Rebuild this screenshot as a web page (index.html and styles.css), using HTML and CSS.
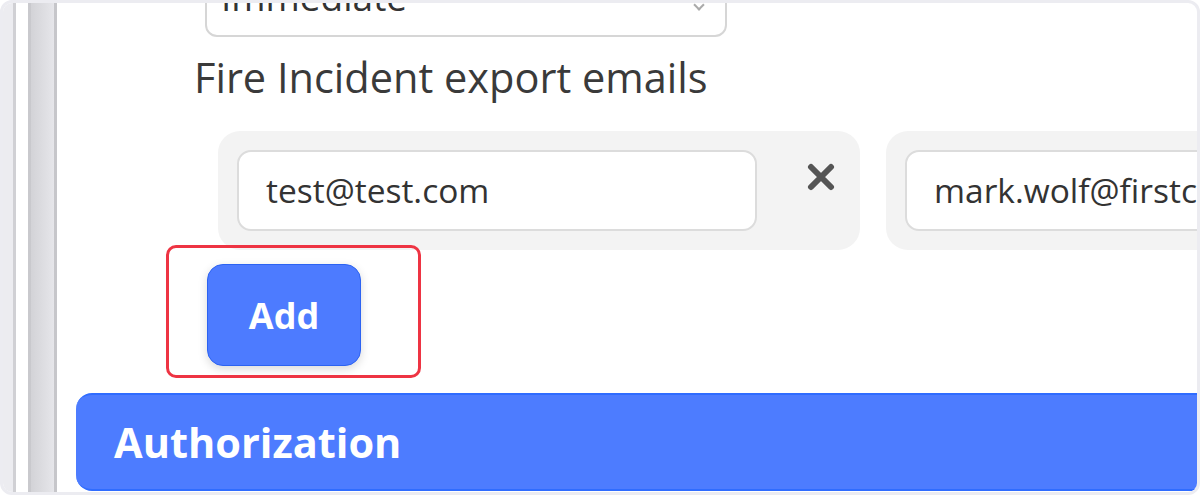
FILE: index.html
```html
<!DOCTYPE html>
<html lang="en">
<head>
  <meta charset="UTF-8" />
  <title>Fire Incident settings</title>
  <link rel="stylesheet" href="styles.css">
</head>
<body>

  <div class="frame">
    <div class="rail">
      <div class="rail-a"></div>
      <div class="rail-gap"></div>
      <div class="rail-b"></div>
    </div>

    <div class="content">
      <div class="field">
        <div class="select">
          <span>Immediate</span>
          <span class="chev"></span>
        </div>

        <div class="field-label">Fire Incident export emails</div>

        <div class="emails">
          <div class="email-item">
            <div class="email-input">test@test.com</div>
            <button class="remove" title="Remove">
              <svg width="28" height="28" viewBox="0 0 28 28">
                <path d="M4 4 L24 24 M24 4 L4 24" stroke="#555" stroke-width="6" stroke-linecap="round" fill="none" />
              </svg>
            </button>
          </div>
          <div class="email-item">
            <div class="email-input wide">mark.wolf@firstcallsolutions.com</div>
          </div>
        </div>

        <div class="add-wrap">
          <button class="add-btn">Add</button>
        </div>
      </div>

      <div class="section-bar">Authorization</div>
    </div>
  </div>

</body>
</html>
```

FILE: styles.css
```css
body {
  margin: 0;
  font-family: "Open Sans", "Noto Sans", sans-serif;
  background: #ffffff;
}
.frame {
  width: 1200px;
  height: 495px;
  box-sizing: border-box;
  border: 3px solid #ececf1;
  border-radius: 12px;
  overflow: hidden;
  display: flex;
  background: #ffffff;
}

/* left rail */
.rail {
  display: flex;
  flex-shrink: 0;
  width: 54px;
}
.rail-a {
  width: 10px;
  background: #ececf0;
  border-right: 3px solid #d0d0d4;
}
.rail-gap {
  width: 12px;
  background: #ffffff;
}
.rail-b {
  width: 23px;
  background: linear-gradient(to right, #d3d3d7, #e6e6ea);
  border-left: 3px solid #c9c9cd;
  border-right: 3px solid #c6c6ca;
}

.content {
  flex: 1;
  min-width: 0;
  padding-left: 19px;
}
.field {
  padding-left: 118px;
}
.select {
  position: relative;
  margin-top: -46px;
  margin-left: 11px;
  width: 522px;
  height: 80px;
  box-sizing: border-box;
  border: 2px solid #d6d6d6;
  border-radius: 12px;
  padding-left: 14px;
  font-size: 37px;
  line-height: 76px;
  color: #333;
}
.chev {
  position: absolute;
  right: 22px;
  top: 42px;
  width: 6px;
  height: 6px;
  border-right: 2px solid #aaa;
  border-bottom: 2px solid #aaa;
  transform: rotate(45deg);
}
.field-label {
  margin-top: 12px;
  font-size: 41.5px;
  color: #3a3a3a;
}
.emails {
  display: flex;
  gap: 26px;
  margin-top: 26px;
  padding-left: 24px;
}
.email-item {
  display: flex;
  flex-shrink: 0;
  background: #f3f3f3;
  border-radius: 22px;
  padding: 19px 0 19px 19px;
}
.email-input {
  width: 520px;
  height: 81px;
  box-sizing: border-box;
  border: 2px solid #dcdcdc;
  border-radius: 14px;
  background: #ffffff;
  padding-left: 27px;
  font-size: 33.5px;
  line-height: 77px;
  color: #333;
  white-space: nowrap;
  overflow: hidden;
}
.email-input.wide {
  width: 600px;
}
.remove {
  width: 103px;
  height: 28px;
  margin-top: 13px;
  padding: 0 0 0 50px;
  border: none;
  background: none;
  display: flex;
  cursor: pointer;
}
.add-wrap {
  position: relative;
  display: inline-block;
  margin-top: 14px;
  margin-left: 13px;
}
.add-wrap::after {
  content: "";
  position: absolute;
  left: -41px;
  top: -19px;
  width: 255px;
  height: 133px;
  box-sizing: border-box;
  border: 3px solid #ee3443;
  border-radius: 10px;
}
.add-btn {
  display: block;
  width: 154px;
  height: 102px;
  background: #4d7bff;
  border: 1px solid #2c63f2;
  border-radius: 16px;
  color: #ffffff;
  font-family: "Open Sans", sans-serif;
  font-weight: bold;
  font-size: 36px;
  box-shadow: 0 3px 10px rgba(0,0,0,0.15);
  cursor: pointer;
}
.section-bar {
  margin-top: 27px;
  margin-right: -14px;
  height: 98px;
  box-sizing: border-box;
  background: #4d7cff;
  border-top: 2px solid #2f6cff;
  border-bottom: 2px solid #2f6cff;
  border-radius: 16px;
  padding-left: 38px;
  display: flex;
  align-items: center;
  color: #ffffff;
  font-weight: bold;
  font-size: 41.5px;
}
```
